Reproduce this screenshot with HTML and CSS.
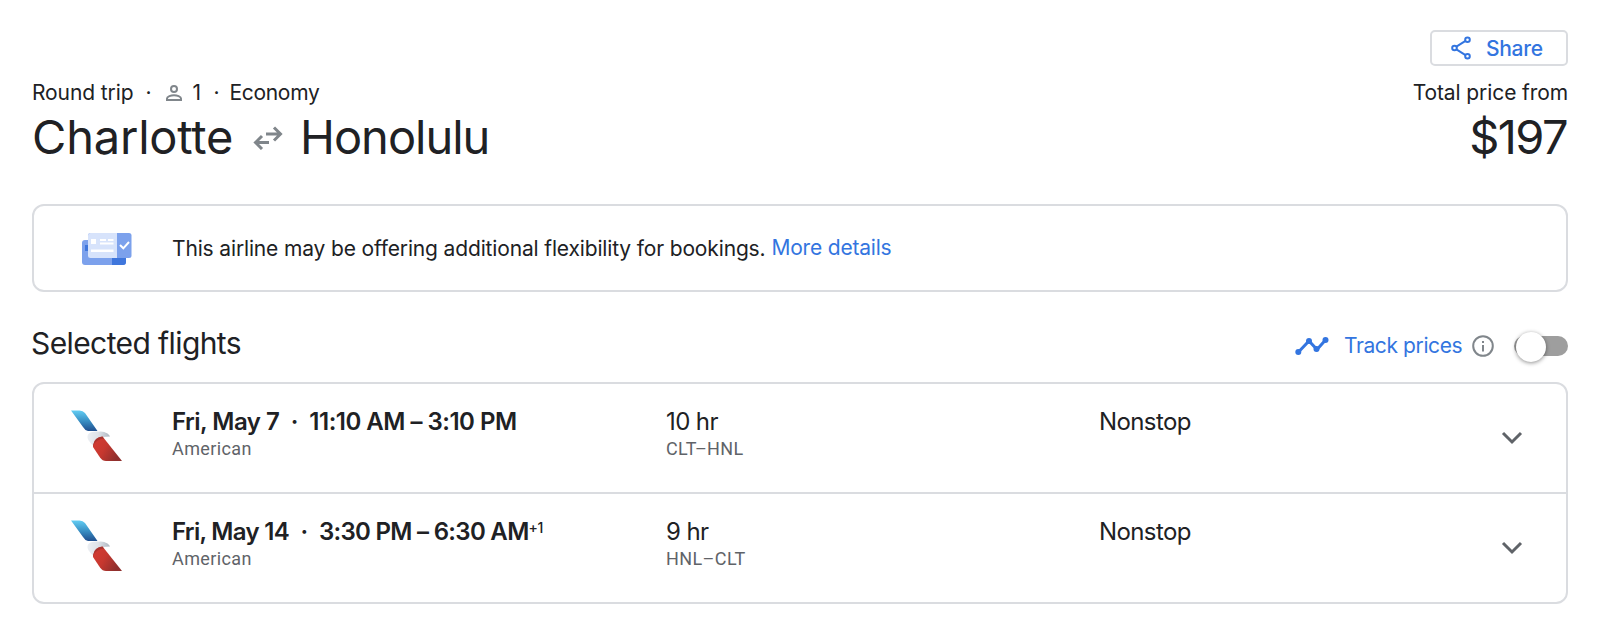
FILE: index.html
```
<!DOCTYPE html>
<html lang="en">
<head>
<meta charset="utf-8">
<title>Charlotte to Honolulu</title>
<link rel="stylesheet" href="styles.css">
</head>
<body>
<svg class="defs" width="0" height="0" aria-hidden="true">
  <defs>
    <linearGradient id="tail-blue" x1="0" y1="0" x2="0" y2="1"><stop offset="0" stop-color="#62cdf3"/><stop offset=".5" stop-color="#3a91c5"/><stop offset="1" stop-color="#204f8f"/></linearGradient>
    <linearGradient id="tail-red" x1="0" y1="0" x2="1" y2="0.5"><stop offset="0" stop-color="#d33c33"/><stop offset=".5" stop-color="#c8382f"/><stop offset="1" stop-color="#8f2f2d"/></linearGradient>
    <linearGradient id="tail-grey" x1="0" y1="0" x2="1" y2="0"><stop offset="0" stop-color="#eceff3"/><stop offset=".5" stop-color="#dde2e8"/><stop offset="1" stop-color="#aeb6bf"/></linearGradient>
    <symbol id="airline" viewBox="0 0 52 52">
      <path d="M0 .5h8.500q3.500 0 5.500 2.500L26.500 21H17q-3-.5-5-4z" fill="url(#tail-blue)"/>
      <path d="M22.500 36C18.500 32 16 29 16.500 26q.5-3.500 6-4.200C31 21 37 22 39 26.500L32 27q-9 1-9.500 9z" fill="url(#tail-grey)"/>
      <path d="M22 35q1.500-8 9.500-8.500L51 51H35q-3.500 0-6-3.500L22 37z" fill="url(#tail-red)"/>
      <path d="M22 35q1.500-8 9.500-8.500l1.500 2q-8 .5-11 7.500z" fill="#8f2f2d" opacity=".6"/>
    </symbol>
    <symbol id="chevron" viewBox="0 0 24 16"><path d="M3 3l9 9 9-9" fill="none" stroke="#5f6368" stroke-width="3"/></symbol>
  </defs>
</svg>
<main class="page">
  <header class="header">
    <div class="actions">
      <button class="share">
        <svg width="20" height="24" viewBox="0 0 20 24" fill="none" stroke="#3375e0" stroke-width="2"><path d="M5 10.800l9.500-6M5 13.200l9.500 6"/><circle cx="3.500" cy="12" r="2.300"/><circle cx="16.500" cy="3.700" r="2.300"/><circle cx="16.500" cy="20.300" r="2.300"/></svg>
        <span class="share-label">Share</span>
      </button>
    </div>
    <div class="summary">
      <div class="trip">
        <span class="trip-type">Round trip</span><span class="dot">·</span>
        <svg class="person" width="16" height="16" viewBox="0 0 16 16" fill="none" stroke="#80868b" stroke-width="2"><circle cx="8" cy="4" r="3"/><path d="M1 15v-1.500C1 11.500 5 10.300 8 10.300s7 1.200 7 3.200V15z"/></svg>
        <span class="pax">1</span><span class="dot dot-2">·</span><span class="cabin">Economy</span>
      </div>
      <span class="price-label">Total price from</span>
    </div>
    <div class="headline">
      <h1 class="route">
        <span class="origin">Charlotte</span>
        <svg class="arrows" width="30" height="24" viewBox="0 0 30 24" fill="none" stroke="#80868b" stroke-width="3"><path d="M13 8h14M21 1.500L27.500 8 21 14.500M16 16.500H3M9 10L2.500 16.500 9 23"/></svg>
        <span class="destination">Honolulu</span>
      </h1>
      <span class="price">$197</span>
    </div>
  </header>

  <section class="notice">
    <svg class="tickets" width="50" height="32" viewBox="0 0 50 32">
      <rect y="7" width="44" height="25" rx="3" fill="#7ca1ec"/><path d="M30 25h14v4q0 3-3 3H30z" fill="#3f76dc"/><path d="M3 12h4v6H3z" fill="#3f76dc"/>
      <rect x="6" width="43.500" height="25" rx="2.500" fill="#7ca1ec"/><path d="M8.500 0H35v25H8.500Q6 25 6 22.500v-20Q6 0 8.500 0z" fill="#d7e3fb"/>
      <path d="M9 6h5v5H9zM18 6h6v2h-6zM26 6h5.500v2H26zM18 9.500h13.500v2H18zM9 16.500h22.500v2.500H9z" fill="#fff"/>
      <path d="M38 12l3.300 3.300L47 9" fill="none" stroke="#fff" stroke-width="2"/>
    </svg>
    <p class="notice-text">This airline may be offering additional flexibility for bookings.</p>
    <a class="more">More details</a>
  </section>

  <div class="section-bar">
    <h2 class="section-title">Selected flights</h2>
    <div class="track">
      <svg width="34" height="20" viewBox="0 0 34 20"><path d="M3.500 16L14 5l8 8.500L30.500 4" fill="none" stroke="#3375e0" stroke-width="3"/><g fill="#3375e0"><circle cx="3.300" cy="16" r="3"/><circle cx="14" cy="5" r="3"/><circle cx="21.500" cy="13" r="3"/><circle cx="30.500" cy="4" r="3"/></g></svg>
      <span class="track-label">Track prices</span>
      <svg class="info" width="22" height="24" viewBox="0 0 22 24"><circle cx="11" cy="12" r="9.800" fill="none" stroke="#80868b" stroke-width="2"/><path d="M10 7h2v2h-2zM10 11h2v6.500h-2z" fill="#80868b"/></svg>
      <span class="toggle"><span class="knob"></span></span>
    </div>
  </div>

  <section class="flights">
    <article class="flight">
      <svg class="logo" width="52" height="52"><use href="#airline"/></svg>
      <div class="when"><div class="time time-out">Fri, May 7<span class="sep">·</span>11:10 AM – 3:10 PM</div><div class="sub">American</div></div>
      <div class="duration"><div class="value">10 hr</div><div class="sub code">CLT–HNL</div></div>
      <div class="stops"><div class="value">Nonstop</div></div>
      <svg class="chevron" width="24" height="16"><use href="#chevron"/></svg>
    </article>
    <article class="flight">
      <svg class="logo" width="52" height="52"><use href="#airline"/></svg>
      <div class="when"><div class="time time-back">Fri, May 14<span class="sep">·</span>3:30 PM – 6:30 AM<sup class="plus">+1</sup></div><div class="sub">American</div></div>
      <div class="duration"><div class="value">9 hr</div><div class="sub code">HNL–CLT</div></div>
      <div class="stops"><div class="value">Nonstop</div></div>
      <svg class="chevron" width="24" height="16"><use href="#chevron"/></svg>
    </article>
  </section>
</main>
</body>
</html>
```
FILE: styles.css
```
* { box-sizing: border-box; margin: 0; padding: 0; }
body { background: #fff; color: #202124; font-family: Inter, "Open Sans", sans-serif; font-size: 21px; font-weight: 400; }
svg { display: block; flex: none; }
.defs { position: absolute; }
.page { padding: 30px 46px 0 32px; white-space: nowrap; }

.actions { display: flex; justify-content: flex-end; }
.share { display: flex; align-items: center; width: 138px; height: 36px; padding-left: 19px; gap: 15px; border: 2px solid #dadce0; border-radius: 5px; background: #fff; color: #3375e0; font: 500 21px/28px Inter, sans-serif; }
.share-label { padding-top: 2px; letter-spacing: -0.3px; }
.summary { display: flex; justify-content: space-between; margin-top: 13px; line-height: 28px; letter-spacing: -0.1px; }
.trip { display: flex; align-items: center; }
.dot { width: 33px; padding-left: 12px; }
.pax { width: 20px; padding-left: 10px; }
.dot-2 { width: 27px; padding-left: 11px; }
.cabin { letter-spacing: -0.3px; }
.headline { display: flex; justify-content: space-between; margin-top: 2px; font-size: 47px; line-height: 56px; }
.route { display: flex; align-items: center; font-size: 47px; font-weight: 400; }
.origin { width: 221px; letter-spacing: -0.2px; }
.arrows { margin-top: 1px; }
.destination { margin-left: 17px; letter-spacing: -1px; }
.price { padding-right: 1px; letter-spacing: -1.6px; }

.notice { display: flex; align-items: center; height: 88px; margin-top: 39px; padding-left: 48px; border: 2px solid #dadce0; border-radius: 12px; }
.tickets { margin-top: 2px; }
.notice-text { margin-left: 40px; letter-spacing: -0.15px; }
.more { margin: -2px 0 0 6px; color: #3375e0; letter-spacing: -0.2px; }

.section-bar { display: flex; justify-content: space-between; height: 40px; margin: 31px 0 19px; line-height: 40px; }
.section-title { margin-left: -1px; font-size: 30px; font-weight: 400; letter-spacing: -0.6px; }
.track { display: flex; align-items: center; height: 46px; }
.track-label { width: 118px; margin-left: 15px; color: #3375e0; letter-spacing: -0.4px; }
.info { margin-left: 10px; }
.toggle { position: relative; width: 54px; height: 20px; margin-left: 20px; border-radius: 10px; background: #9e9e9e; }
.knob { position: absolute; top: -4px; left: 2px; width: 30px; height: 30px; border-radius: 50%; background: #fff; box-shadow: 0 1px 4px rgba(0, 0, 0, .45); }

.flights { border: 2px solid #dadce0; border-radius: 12px; }
.flight { display: grid; grid-template-columns: 102px 494px 433px 401px 24px; height: 108px; padding: 23px 0 0 36px; }
.flight + .flight { height: 110px; border-top: 2px solid #dadce0; }
.logo { margin: 3px 0 0 1px; }
.time, .value { font-size: 24px; line-height: 30px; letter-spacing: -0.6px; }
.time { font-weight: 600; }
.time-out { letter-spacing: -0.5px; }
.time-back { letter-spacing: -0.7px; }
.sep { display: inline-block; width: 30px; text-align: center; }
.plus { font-size: 14px; line-height: 0; font-weight: 500; vertical-align: 7px; letter-spacing: -0.4px; }
.sub { color: #5f6368; font: 400 18px/24px Roboto, sans-serif; letter-spacing: .4px; }
.chevron { margin-top: 23px; }
```
